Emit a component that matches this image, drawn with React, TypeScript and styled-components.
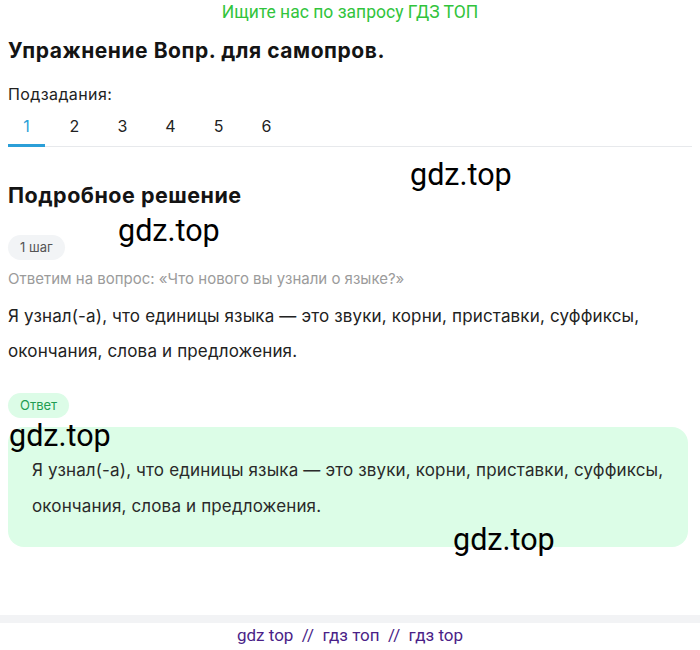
import React from "react";
import styled, { createGlobalStyle } from "styled-components";

const Global = createGlobalStyle`
  html, body { margin: 0; padding: 0; background: #fff; }
  body { font-family: Inter, Roboto, "Noto Sans", Arial, sans-serif; color: #1f1f1f; }
  * { box-sizing: border-box; }
`;

const Page = styled.div`
  width: 700px;
  height: 650px;
  display: flex;
  flex-direction: column;
  position: relative;
  overflow: hidden;
`;

const Banner = styled.div`
  font-family: Roboto, Arial, sans-serif;
  text-align: center;
  color: #31c43c;
  font-size: 17.5px;
  line-height: 24px;
  height: 24px;
`;

const Content = styled.main`
  padding: 0 8px;
  flex: 1;
  display: flex;
  flex-direction: column;
`;

const Title = styled.h1`
  margin: 13px 0 0;
  font-size: 21px;
  line-height: 28px;
  font-weight: 700;
  color: #141414;
  letter-spacing: 0.55px;
`;

const Label = styled.div`
  margin-top: 19px;
  font-size: 16px;
  line-height: 20px;
  letter-spacing: 0.4px;
  color: #222;
`;

const Tabs = styled.nav`
  display: flex;
  gap: 11px;
  margin-top: 12px;
  border-bottom: 1px solid #e7e9ec;
`;

const Tab = styled.div<{ $active?: boolean }>`
  width: 37px;
  text-align: center;
  padding-bottom: 8px;
  font-size: 16px;
  line-height: 20px;
  color: ${(p) => (p.$active ? "#2b9fd8" : "#222")};
  border-bottom: 3px solid ${(p) => (p.$active ? "#2b9fd8" : "transparent")};
  margin-bottom: -1px;
`;

const SectionTitle = styled.h2`
  margin: 34px 0 0;
  font-size: 21.5px;
  line-height: 28px;
  font-weight: 700;
  color: #141414;
  letter-spacing: 0.5px;
`;

const Pill = styled.div<{ $green?: boolean }>`
  align-self: flex-start;
  height: 25px;
  line-height: 25px;
  padding: 0 12px;
  border-radius: 13px;
  font-size: 13px;
  background: ${(p) => (p.$green ? "#dcfce7" : "#f2f4f6")};
  color: ${(p) => (p.$green ? "#1f9d52" : "#555")};
`;

const StepPill = styled(Pill)`
  margin-top: 26px;
`;

const AnswerPill = styled(Pill)`
  margin-top: 24px;
`;

const Question = styled.p`
  margin: 9px 0 0;
  font-size: 15px;
  line-height: 20px;
  color: #9b9b9b;
`;

const Body = styled.p`
  margin: 10px 0 0;
  font-size: 17px;
  line-height: 35px;
  letter-spacing: 0.15px;
  color: #222;
`;

const AnswerBox = styled.section`
  margin: 9px 4px 0 0;
  background: #dcfde7;
  border-radius: 16px;
  padding: 25px 24px 0;
  height: 120px;
`;

const AnswerText = styled.p`
  margin: 0;
  font-size: 17px;
  line-height: 36px;
  letter-spacing: 0.15px;
  color: #2a2a2a;
`;

const FooterBand = styled.div`
  height: 8px;
  background: #f2f3f5;
  margin-top: auto;
`;

const Footer = styled.footer`
  font-family: Roboto, Arial, sans-serif;
  height: 27px;
  text-align: center;
  font-size: 17px;
  line-height: 24px;
  color: #4b1f88;
  white-space: pre;
`;

const Mark = styled.div<{ $x: number; $y: number }>`
  position: absolute;
  left: ${(p) => p.$x}px;
  top: ${(p) => p.$y}px;
  font-family: Roboto, Arial, sans-serif;
  font-size: 30.5px;
  color: #000;
  pointer-events: none;
`;

const text =
  "Я узнал(-а), что единицы языка — это звуки, корни, приставки, суффиксы, окончания, слова и предложения.";

export default function App() {
  return (
    <>
      <Global />
      <Page>
        <Banner>Ищите нас по запросу ГДЗ ТОП</Banner>
        <Content>
          <Title>Упражнение Вопр. для самопров.</Title>
          <Label>Подзадания:</Label>
          <Tabs>
            {[1, 2, 3, 4, 5, 6].map((n) => (
              <Tab key={n} $active={n === 1}>
                {n}
              </Tab>
            ))}
          </Tabs>
          <SectionTitle>Подробное решение</SectionTitle>
          <StepPill>1 шаг</StepPill>
          <Question>Ответим на вопрос: «Что нового вы узнали о языке?»</Question>
          <Body>{text}</Body>
          <AnswerPill $green>Ответ</AnswerPill>
          <AnswerBox>
            <AnswerText>{text}</AnswerText>
          </AnswerBox>
        </Content>
        <FooterBand />
        <Footer>{"gdz top  //  гдз топ  //  гдз top"}</Footer>
        <Mark $x={410} $y={157}>gdz.top</Mark>
        <Mark $x={118} $y={213}>gdz.top</Mark>
        <Mark $x={9} $y={418}>gdz.top</Mark>
        <Mark $x={453} $y={522}>gdz.top</Mark>
      </Page>
    </>
  );
}
